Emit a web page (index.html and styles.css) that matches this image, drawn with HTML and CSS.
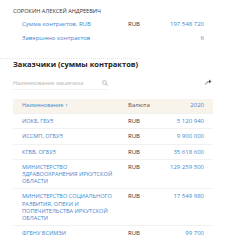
FILE: index.html
```html
<!DOCTYPE html>
<html>
<head>
<meta charset="utf-8">
<link rel="stylesheet" href="styles.css">
</head>
<body>
<div class="page">
  <div class="person">СОРОКИН АЛЕКСЕЙ АНДРЕЕВИЧ</div>
  <div class="stat first">
    <span class="stat-label">Сумма контрактов, RUB</span>
    <span class="stat-cur">RUB</span>
    <span class="stat-val">197 548 720</span>
  </div>
  <div class="stat">
    <span class="stat-label">Завершено контрактов</span>
    <span class="stat-cur"></span>
    <span class="stat-val">6</span>
  </div>
  <div class="dots"></div>

  <h2 class="title">Заказчики (суммы контрактов)</h2>

  <div class="toolbar">
    <div class="search">
      <span class="placeholder">Наименование заказчика</span>
      <svg class="search-icon" width="6" height="6" viewBox="0 0 12 12"><circle cx="5" cy="5" r="3.8" fill="none" stroke="#a0a4a8" stroke-width="1.4"/><path d="M8 8l3 3" stroke="#a0a4a8" stroke-width="1.5" stroke-linecap="round"/></svg>
    </div>
    <svg class="share" width="7" height="6" viewBox="0 0 14 12"><path d="M1 11c1-4 4-6 9-6" fill="none" stroke="#555" stroke-width="1.6"/><path d="M8 1l5 4-5 4z" fill="#555"/></svg>
  </div>

  <div class="table">
    <div class="row head">
      <span class="c-name">Наименование ↑</span>
      <span class="c-cur">Валюта</span>
      <span class="c-val">2020</span>
    </div>
    <div class="row">
      <span class="c-name">ИОКБ, ГБУЗ</span>
      <span class="c-cur">RUB</span>
      <span class="c-val">5 120 940</span>
    </div>
    <div class="row">
      <span class="c-name">ИССМП, ОГБУЗ</span>
      <span class="c-cur">RUB</span>
      <span class="c-val">9 900 000</span>
    </div>
    <div class="row">
      <span class="c-name">КГВВ, ОГБУЗ</span>
      <span class="c-cur">RUB</span>
      <span class="c-val">35 618 600</span>
    </div>
    <div class="row">
      <span class="c-name">МИНИСТЕРСТВО ЗДРАВООХРАНЕНИЯ ИРКУТСКОЙ ОБЛАСТИ</span>
      <span class="c-cur">RUB</span>
      <span class="c-val">129 259 500</span>
    </div>
    <div class="row">
      <span class="c-name">МИНИСТЕРСТВО СОЦИАЛЬНОГО РАЗВИТИЯ, ОПЕКИ И ПОПЕЧИТЕЛЬСТВА ИРКУТСКОЙ ОБЛАСТИ</span>
      <span class="c-cur">RUB</span>
      <span class="c-val">17 549 980</span>
    </div>
    <div class="row">
      <span class="c-name">ФГБНУ ВСИМЭИ</span>
      <span class="c-cur">RUB</span>
      <span class="c-val">99 700</span>
    </div>
  </div>
</div>
</body>
</html>
```

FILE: styles.css
```css
* { box-sizing: border-box; }
html, body { margin: 0; padding: 0; background: #fff; }
body {
  font-family: "Open Sans", "Noto Sans", sans-serif;
  font-size: 6px;
  color: #333;
}
.page {
  width: 242px;
  padding: 7px 29px 0 13px;
}
.person {
  height: 8px;
  line-height: 8px;
  font-size: 5.6px;
  color: #333;
}
.stat {
  display: flex;
  align-items: center;
  height: 14px;
  line-height: 8px;
  padding: 0 9px;
}
.stat.first { margin-top: 2px; }
.stat-label { color: #3f86cc; width: 106px; white-space: nowrap; }
.stat-cur { color: #333; width: 40px; }
.stat-val { color: #3f86cc; flex: 1; text-align: right; }
.dots {
  margin: 13px 0 0 -13px;
  width: 140px;
  border-top: 1px dotted #e6e6e6;
}
.title {
  margin: 0;
  height: 10px;
  line-height: 10px;
  font-size: 7.5px;
  font-weight: 700;
  color: #222;
}
.toolbar {
  display: flex;
  align-items: center;
  justify-content: space-between;
  margin-top: 8px;
  height: 13px;
}
.search {
  display: flex;
  align-items: center;
  justify-content: space-between;
  width: 95px;
  height: 13px;
  border-bottom: 1px solid #f1f1f1;
}
.placeholder { color: #b3b3b3; font-size: 5.6px; }
.share { margin-right: 1px; margin-top: -4px; }
.table { margin-top: 9px; }
.row {
  display: grid;
  grid-template-columns: 106px 40px 1fr;
  align-items: start;
  padding: 4px 9px 3px;
  border-top: 1px solid #f1f1f1;
  line-height: 7.2px;
}
.row.head {
  background: #f8f4ec;
  border-top: none;
  padding: 3px 9px 4px;
}
.c-name { color: #3f86cc; padding-right: 12px; font-size: 5.6px; }
.c-cur { color: #333; }
.c-val { color: #3f86cc; text-align: right; }
.head .c-cur { color: #555; }
```
